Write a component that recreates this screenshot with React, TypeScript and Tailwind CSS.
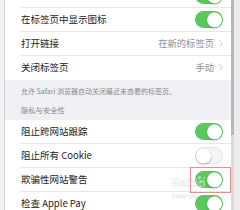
import React from 'react'

const font = { fontFamily: '"Noto Sans CJK SC", "Noto Sans", sans-serif' }

function Toggle({ on, paw }: { on: boolean; paw?: boolean }) {
  return (
    <div
      className={`relative w-[28px] h-[17px] rounded-full ${
        on ? 'bg-[#5bc85e]' : 'bg-[#f4f4f4] border border-[#e3e3e3]'
      }`}
    >
      <div
        className={`absolute top-1/2 -translate-y-1/2 w-[15px] h-[15px] rounded-full bg-white shadow-[0_1px_2px_rgba(0,0,0,0.3)] ${
          on ? 'right-[1px]' : 'left-[0px]'
        }`}
      />
      {paw && (
        <>
          <div className="absolute left-[3px] top-[5px] w-[3px] h-[3px] rounded-full bg-white/50" />
          <div className="absolute left-[5px] top-[9px] w-[3px] h-[3px] rounded-full bg-white/50" />
          <div className="absolute left-[8px] top-[6px] w-[2px] h-[2px] rounded-full bg-white/40" />
        </>
      )}
    </div>
  )
}

function Row({ label, right, last }: { label: string; right: React.ReactNode; last?: boolean }) {
  return (
    <div className="pl-[16px] bg-white">
      <div
        className={`h-[24px] flex items-center justify-between pr-[8px] ${
          last ? '' : 'border-b border-[#e6e6e6]'
        }`}
      >
        <span className="text-[9.5px] leading-none text-[#222]">{label}</span>
        {right}
      </div>
    </div>
  )
}

function Value({ text }: { text: string }) {
  return (
    <div className="flex items-center gap-[5px] text-[9.3px] leading-none text-[#8e8e93]">
      <span>{text}</span>
      <svg width="4" height="7" viewBox="0 0 4 7" fill="none">
        <path d="M0.5 0.5 L3.5 3.5 L0.5 6.5" stroke="#c4c4c7" strokeWidth="0.9" />
      </svg>
    </div>
  )
}

export default function App() {
  return (
    <div className="w-[240px] h-[210px] overflow-hidden flex bg-[#efeff4] relative" style={font}>
      <div className="w-[5px] h-full bg-[#f3f3f3] border-r border-[#d2d2d2]" />
      <div className="flex-1 -mt-[16px]">
        <Row label="在标签页中显示图标" right={<Toggle on />} />
        <Row label="在标签页中显示图标" right={<Toggle on />} />
        <Row label="打开链接" right={<Value text="在新的标签页" />} />
        <Row label="关闭标签页" right={<Value text="手动" />} last />
        <div className="bg-[#efeff4] pl-[16px]">
          <div className="pt-[6px] text-[7px] leading-[10px] text-[#8a8a8e]">
            允许 Safari 浏览器自动关闭最近未查看的标签页。
          </div>
          <div className="pt-[9px] pb-[5px] text-[7.3px] leading-[10px] text-[#8a8a8e]">隐私与安全性</div>
        </div>
        <Row label="阻止跨网站跟踪" right={<Toggle on />} />
        <Row label="阻止所有 Cookie" right={<Toggle on={false} />} />
        <Row label="欺骗性网站警告" right={<Toggle on paw />} />
        <Row label="检查 Apple Pay" right={<Toggle on />} />
      </div>
      <div className="w-[9px] h-full flex bg-[#ececec]">
        <div className="w-[3px] h-full flex flex-col">
          <div className="h-[135px] bg-[#b8b8b8]" />
          <div className="flex-1 bg-[#dcdcdc]" />
        </div>
      </div>
      <div className="absolute left-[190px] top-[167px] w-[41px] h-[26px] border border-[#f08a8a]" />
      <div className="absolute left-[171px] top-[176px] text-[13px] leading-none font-bold text-white/40 tracking-tight" style={{ fontFamily: '"Liberation Sans", sans-serif', WebkitTextStroke: '0.5px rgba(150,150,150,0.3)' }}>
        Baidu
      </div>
      <div className="absolute left-[172px] top-[194px] text-[5px] leading-none text-[#999]/40" style={{ fontFamily: '"Liberation Sans", sans-serif' }}>
        jingyan.baidu.com
      </div>
    </div>
  )
}
